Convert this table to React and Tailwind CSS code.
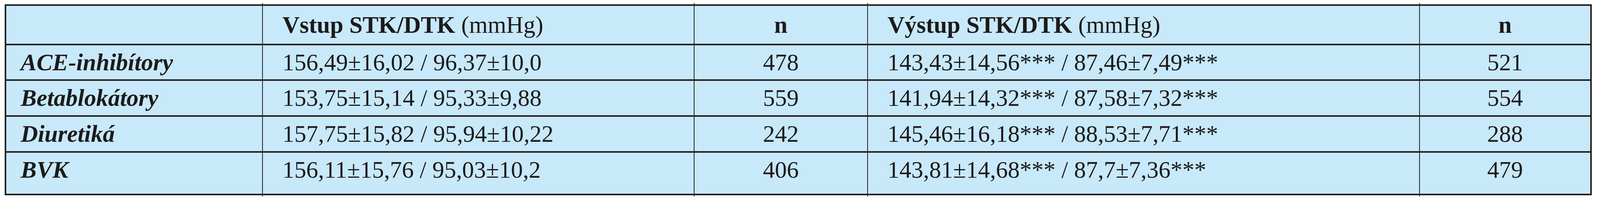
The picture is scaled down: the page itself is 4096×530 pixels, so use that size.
import React from "react";

const rows = [
  { name: "ACE-inhibítory", vstup: "156,49±16,02 / 96,37±10,0", n1: "478", vystup: "143,43±14,56*** / 87,46±7,49***", n2: "521", h: "h-[91px]" },
  { name: "Betablokátory", vstup: "153,75±15,14 / 95,33±9,88", n1: "559", vystup: "141,94±14,32*** / 87,58±7,32***", n2: "554", h: "h-[92px]" },
  { name: "Diuretiká", vstup: "157,75±15,82 / 95,94±10,22", n1: "242", vystup: "145,46±16,18*** / 88,53±7,71***", n2: "288", h: "h-[92px]" },
  { name: "BVK", vstup: "156,11±15,76 / 95,03±10,2", n1: "406", vystup: "143,81±14,68*** / 87,7±7,36***", n2: "479", h: "h-[109px]" },
];

const grid = "grid grid-cols-[655px_1105px_444px_1413px_438px]";
const divider = "border-l-2 border-[#231f20]";
const topTick = "relative before:absolute before:left-[-2px] before:top-[-7px] before:h-[7px] before:w-[2px] before:bg-[#231f20] before:content-['']";
const bottomTick = "relative after:absolute after:left-[-2px] after:bottom-[-7px] after:h-[7px] after:w-[2px] after:bg-[#231f20] after:content-['']";

export default function App() {
  return (
    <div className="bg-white w-[4096px] h-[530px] pt-[11px] pl-[12px]" style={{ fontFamily: '"Liberation Serif", "Times New Roman", serif' }}>
      <div className="w-[4063px] border-4 border-[#231f20] bg-[#c8e9fa] text-[61px] leading-none text-[#1c1a1b]">
        {/* header */}
        <div className={`${grid} h-[97px]`}>
          <div />
          <div className={`${divider} ${topTick} flex items-center pl-[50px]`}>
            <span className="font-bold">Vstup STK/DTK</span>
            <span className="whitespace-pre"> (mmHg)</span>
          </div>
          <div className={`${divider} ${topTick} flex items-center justify-center font-bold`}>n</div>
          <div className={`${divider} ${topTick} flex items-center pl-[50px]`}>
            <span className="font-bold">Výstup STK/DTK</span>
            <span className="whitespace-pre"> (mmHg)</span>
          </div>
          <div className={`${divider} ${topTick} flex items-center justify-center font-bold`}>n</div>
        </div>

        {rows.map((r, i) => {
          const tick = i === rows.length - 1 ? bottomTick : "";
          return (
            <div key={r.name} className={`${grid} ${r.h} border-t-4 border-[#231f20]`}>
              <div className="pt-[13px] pl-[37px] font-bold italic">{r.name}</div>
              <div className={`${divider} ${tick} pt-[13px] pl-[50px] whitespace-pre`}>{r.vstup}</div>
              <div className={`${divider} ${tick} pt-[13px] text-center`}>{r.n1}</div>
              <div className={`${divider} ${tick} pt-[13px] pl-[50px] whitespace-pre`}>{r.vystup}</div>
              <div className={`${divider} ${tick} pt-[13px] text-center`}>{r.n2}</div>
            </div>
          );
        })}
      </div>
    </div>
  );
}
